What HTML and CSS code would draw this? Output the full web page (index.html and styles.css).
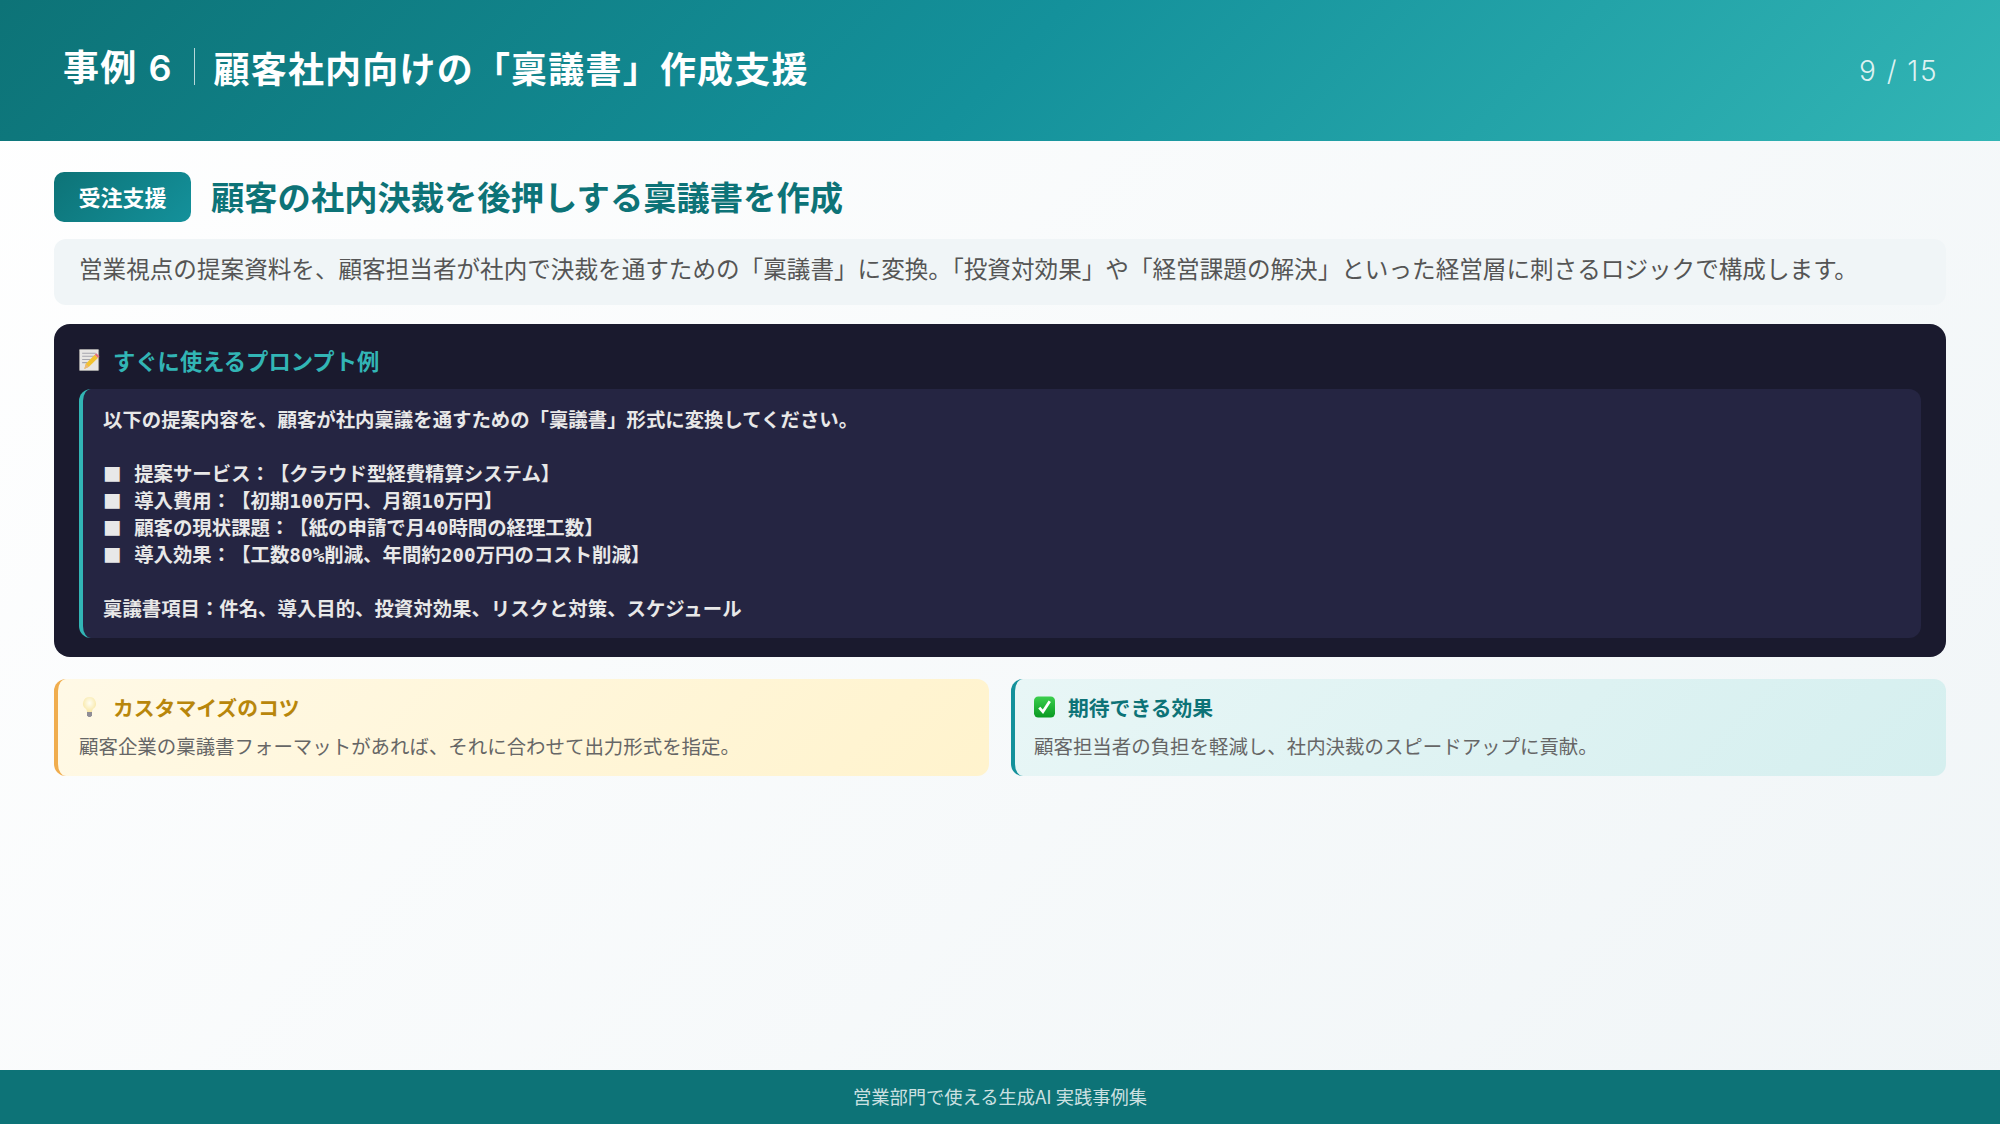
FILE: index.html
```html
<!DOCTYPE html>
<html lang="ja">
<head>
    <meta charset="UTF-8">
    <meta name="viewport" content="width=device-width, initial-scale=1.0">
    <title>事例 6</title>
    <link rel="stylesheet" href="styles.css">
</head>
<body>
  <div class="slide">
    <header class="slide-header">
      <h1 class="slide-title"><span class="case-no">事例<span class="case-digit"> 6</span></span>顧客社内向けの「稟議書」作成支援</h1>
      <span class="page-no">9 / 15</span>
    </header>

    <main class="content">
      <div class="heading-row">
        <span class="badge">受注支援</span>
        <h2 class="heading">顧客の社内決裁を後押しする稟議書を作成</h2>
      </div>

      <p class="lead">営業視点の提案資料を、顧客担当者が社内で決裁を通すための「稟議書」に変換。「投資対効果」や「経営課題の解決」といった経営層に刺さるロジックで構成します。</p>

      <section class="prompt">
        <div class="prompt-title">
          <svg class="icon" viewBox="0 0 20 21">
            <rect x="0.3" y="0.3" width="18.500" height="20.400" rx="1" fill="#e8e6e4" stroke="#8d8b8a" stroke-width="0.6"/>
            <path d="M3 4h13M3 7h13M3 10h8M3 13h5" stroke="#a5a5ad" stroke-width="1"/>
            <path d="M5 19l1.500-5L15 5.500l3 3-8.500 8.500z" fill="#f2c230"/>
            <path d="M15 5.500l1.500-1.500 3 3L18 8.500z" fill="#e0707c"/>
            <path d="M5 19l1.500-5 3 3z" fill="#e9b779"/>
          </svg>
          <span>すぐに使えるプロンプト例</span>
        </div>
        <pre class="prompt-body">以下の提案内容を、顧客が社内稟議を通すための「稟議書」形式に変換してください。

<span class="sq">■</span> 提案サービス：【クラウド型経費精算システム】
<span class="sq">■</span> 導入費用：【初期100万円、月額10万円】
<span class="sq">■</span> 顧客の現状課題：【紙の申請で月40時間の経理工数】
<span class="sq">■</span> 導入効果：【工数80%削減、年間約200万円のコスト削減】

稟議書項目：件名、導入目的、投資対効果、リスクと対策、スケジュール</pre>
      </section>

      <div class="tips">
        <div class="tip tip-yellow">
          <div class="tip-title">
            <svg class="icon" viewBox="0 0 20 22">
              <defs>
                <radialGradient id="bulb" cx="50%" cy="40%" r="60%">
                  <stop offset="0" stop-color="#fffef4"/>
                  <stop offset="1" stop-color="#f8e7a4"/>
                </radialGradient>
              </defs>
              <path d="M10 1a6.500 6.500 0 0 0-4 11.600c1 .9 1.500 2 1.500 3.400h5c0-1.400.5-2.500 1.500-3.400A6.500 6.500 0 0 0 10 1z" fill="url(#bulb)"/>
              <path d="M7.500 16h5v3.500l-1.500 1.500h-2l-1.500-1.500z" fill="#8f8d96"/>
            </svg>
            <span>カスタマイズのコツ</span>
          </div>
          <p class="tip-text">顧客企業の稟議書フォーマットがあれば、それに合わせて出力形式を指定。</p>
        </div>
        <div class="tip tip-teal">
          <div class="tip-title">
            <svg class="icon" viewBox="0 0 20 20">
              <defs>
                <linearGradient id="check" x1="0" y1="0" x2="0" y2="1">
                  <stop offset="0" stop-color="#3ccf4e"/>
                  <stop offset="1" stop-color="#0a9a22"/>
                </linearGradient>
              </defs>
              <rect x="0" y="0" width="20" height="20" rx="4" fill="url(#check)"/>
              <path d="M5 10.500l3.500 4L15 4.500" fill="none" stroke="#fff" stroke-width="2.600"/>
            </svg>
            <span>期待できる効果</span>
          </div>
          <p class="tip-text">顧客担当者の負担を軽減し、社内決裁のスピードアップに貢献。</p>
        </div>
      </div>
    </main>

    <footer class="slide-footer">営業部門で使える生成AI 実践事例集</footer>
  </div>
</body>
</html>
```

FILE: styles.css
```css
* {
  margin: 0;
  padding: 0;
  box-sizing: border-box;
  font-family: "Noto Sans CJK JP", "Noto Sans", sans-serif;
}

body {
  width: 2000px;
  height: 1124px;
  overflow: hidden;
}

.slide {
  width: 2000px;
  height: 1124px;
  display: flex;
  flex-direction: column;
  background: linear-gradient(135deg, #ffffff 0%, #f0f5f7 100%);
}

/* header */
.slide-header {
  height: 141px;
  padding: 0 62px 0 63px;
  display: flex;
  align-items: center;
  justify-content: space-between;
  background: linear-gradient(135deg, #0d7377 0%, #14919b 50%, #32b5b5 100%);
}

.slide-title {
  font-size: 36px;
  font-weight: 700;
  letter-spacing: 1.200px;
  color: #fff;
  display: flex;
  align-items: center;
  padding-bottom: 8px;
}

.case-no {
  padding-right: 20px;
  margin-right: 19px;
  border-right: 1px solid rgba(255, 255, 255, 0.7);
  line-height: 34px;
}

.case-digit {
  font-family: "Inter", sans-serif;
  font-weight: 600;
  white-space: pre;
  letter-spacing: 2px;
}

.page-no {
  font-family: "Inter", sans-serif;
  font-size: 28px;
  font-weight: 300;
  letter-spacing: 1.500px;
  color: rgba(255, 255, 255, 0.85);
}

/* content */
.content {
  flex: 1;
  padding: 31px 54px 0;
}

.heading-row {
  display: flex;
  align-items: center;
  gap: 20px;
  height: 50px;
}

.badge {
  width: 137px;
  height: 50px;
  padding-bottom: 2px;
  border-radius: 10px;
  display: flex;
  align-items: center;
  justify-content: center;
  font-size: 22px;
  font-weight: 700;
  color: #fff;
  background: linear-gradient(135deg, #0d7377, #14919b);
}

.heading {
  font-size: 33.300px;
  font-weight: 700;
  color: #0d7377;
  padding-bottom: 3px;
}

.lead {
  margin-top: 17px;
  height: 66px;
  padding: 0 25px;
  border-radius: 12px;
  background: #f0f5f7;
  font-size: 23.600px;
  line-height: 59px;
  color: #555;
}

.prompt {
  margin-top: 19px;
  height: 333px;
  padding: 20px 25px 19px;
  border-radius: 16px;
  background: #1a1a2e;
}

.prompt-title {
  height: 45px;
  display: flex;
  align-items: center;
  gap: 13px;
  padding-bottom: 14px;
  font-size: 22.300px;
  font-weight: 700;
  color: #32b5b5;
}

.icon {
  width: 21px;
  height: 22px;
  flex-shrink: 0;
}

.prompt-body {
  height: 249px;
  padding: 18px 19px 0 20px;
  border-left: 4px solid #32b5b5;
  border-radius: 12px;
  background: #252542;
  font-family: "DejaVu Sans Mono", "Noto Sans CJK JP", monospace;
  font-size: 19.400px;
  font-weight: 700;
  line-height: 27px;
  color: #e8e8e8;
  text-spacing-trim: space-all;
}

.sq {
  font-family: "Noto Sans CJK JP", sans-serif;
  font-size: 18.500px;
  line-height: 0;
  margin-right: 1px;
}

.tips {
  margin-top: 22px;
  display: grid;
  grid-template-columns: 1fr 1fr;
  gap: 22px;
}

.tip {
  height: 97px;
  padding: 10px 21px;
  border-radius: 12px;
}

.tip-yellow {
  border-left: 4px solid #f0ad4e;
  background: linear-gradient(135deg, #fff9e6, #fff3cd);
}

.tip-teal {
  padding-left: 19px;
  border-left: 4px solid #14919b;
  background: linear-gradient(135deg, #e8f6f6, #d5efef);
}

.tip-title {
  height: 36px;
  display: flex;
  align-items: center;
  gap: 13px;
  font-size: 20.800px;
  font-weight: 700;
}

.tip-yellow .tip-title {
  color: #b8860b;
}

.tip-teal .tip-title {
  color: #0d7377;
}

.tip-text {
  margin-top: 5px;
  font-size: 19.450px;
  line-height: 32px;
  color: #666;
}

/* footer */
.slide-footer {
  height: 54px;
  padding-bottom: 2px;
  display: flex;
  align-items: center;
  justify-content: center;
  background: #0d7377;
  font-size: 18.300px;
  color: rgba(255, 255, 255, 0.8);
}
```
